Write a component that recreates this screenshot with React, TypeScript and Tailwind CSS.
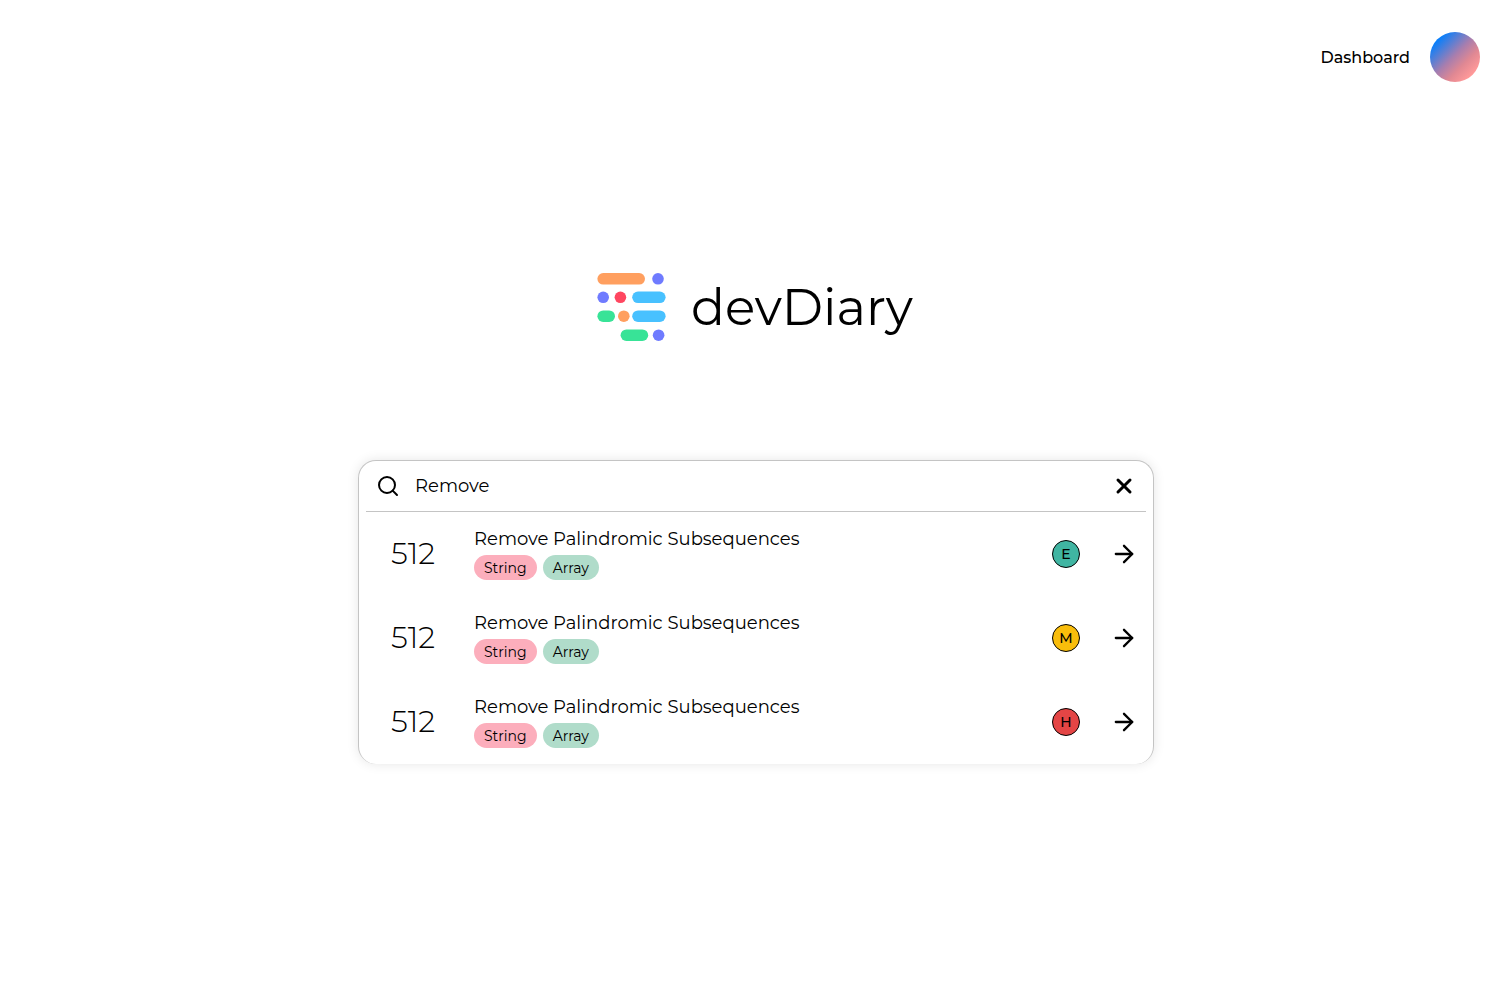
import { useRef, useState } from "react";
import { ArrowRight, Search, X } from "lucide-react";

type Problem = { number: number; title: string; level: "E" | "M" | "H" };

const problems: Problem[] = [
  { number: 512, title: "Remove Palindromic Subsequences", level: "E" },
  { number: 512, title: "Remove Palindromic Subsequences", level: "M" },
  { number: 512, title: "Remove Palindromic Subsequences", level: "H" },
];

const levelColor = {
  E: "bg-[#40b5a2]",
  M: "bg-[#f9bd0b]",
  H: "bg-[#e44545]",
};

function Logo() {
  return (
    <svg className="size-[70px]" viewBox="0 0 70 70" aria-hidden="true">
      <rect x="0.4" y="1" width="47.6" height="11.6" rx="5.8" fill="#ff9f5f" />
      <circle cx="61" cy="6.8" r="5.8" fill="#6f7bff" />
      <circle cx="6.2" cy="25.3" r="5.8" fill="#6f7bff" />
      <circle cx="23.4" cy="25.3" r="5.8" fill="#ff4660" />
      <rect x="35.2" y="19.5" width="33.4" height="11.6" rx="5.8" fill="#48c1ff" />
      <rect x="0.4" y="38.4" width="17.6" height="11.6" rx="5.8" fill="#38e397" />
      <circle cx="26.8" cy="44.2" r="5.8" fill="#ff9f5f" />
      <rect x="35.2" y="38.4" width="33.4" height="11.6" rx="5.8" fill="#48c1ff" />
      <rect x="23.6" y="57.4" width="27.6" height="11.6" rx="5.8" fill="#38e397" />
      <circle cx="61.6" cy="63.2" r="5.8" fill="#6f7bff" />
    </svg>
  );
}

function ProblemRow({ number, title, level }: Problem) {
  return (
    <li className="flex h-21 items-center pr-[15px] pl-8">
      <span className="w-[83px] shrink-0 text-3xl font-light">{number}</span>
      <div className="min-w-0 flex-1">
        <h2 className="text-lg/6">{title}</h2>
        <div className="mt-1 flex gap-1.5 pb-0.5 text-sm/[23px]">
          <span className="rounded-full bg-[#fcaebc] px-2.5 pt-0.5">String</span>
          <span className="rounded-full bg-[#b0dcca] px-2.5 pt-0.5">Array</span>
        </div>
      </div>
      <span className={`mr-[30px] flex size-7 items-center justify-center rounded-full border border-black text-sm font-medium ${levelColor[level]}`}>
        {level}
      </span>
      <a href="#problem" aria-label={`Open ${title}`}>
        <ArrowRight className="size-7" strokeWidth={2} />
      </a>
    </li>
  );
}

export default function App() {
  const [query, setQuery] = useState("Remove");
  const input = useRef<HTMLInputElement>(null);
  return (
    <div className="min-h-screen bg-white font-['Montserrat','Inter',sans-serif] text-black">
      <header className="flex items-center justify-end gap-5 p-8">
        <a href="#dashboard" className="pt-0.5 text-base font-medium">Dashboard</a>
        <button
          type="button"
          aria-label="Account"
          className="size-[50px] rounded-full bg-[linear-gradient(135deg,#007fff_14%,#a87eae_48%,#e08893_66%,#ff9999_84%)]"
        />
      </header>
      <main className="flex flex-col items-center px-4 pt-[158px] pb-16">
        <div className="flex items-center gap-6 pr-0.5">
          <Logo />
          <h1 className="pt-0.5 text-[50px]/[68px]">devDiary</h1>
        </div>
        <section className="mt-[118px] w-full max-w-[796px] rounded-[18px] border border-b-0 border-[#c4c4c4] bg-white shadow-[0_0_12px_rgba(0,0,0,0.1)]">
          <form role="search" className="mx-[7px] flex h-[51px] items-center border-b border-[#c4c4c4] px-2.5" onSubmit={(e) => e.preventDefault()}>
            <label htmlFor="query" aria-label="Search problems">
              <Search className="size-6" />
            </label>
            <input
              id="query"
              ref={input}
              value={query}
              onChange={(e) => setQuery(e.target.value)}
              className="ml-[15px] min-w-0 flex-1 bg-transparent text-lg/6 outline-none"
            />
            <button
              type="button"
              aria-label="Clear search"
              onClick={() => {
                setQuery("");
                input.current?.focus();
              }}
            >
              <X className="size-6" strokeWidth={3} />
            </button>
          </form>
          <ul>
            {problems.map((problem) => (
              <ProblemRow key={problem.level} {...problem} />
            ))}
          </ul>
        </section>
      </main>
    </div>
  );
}
